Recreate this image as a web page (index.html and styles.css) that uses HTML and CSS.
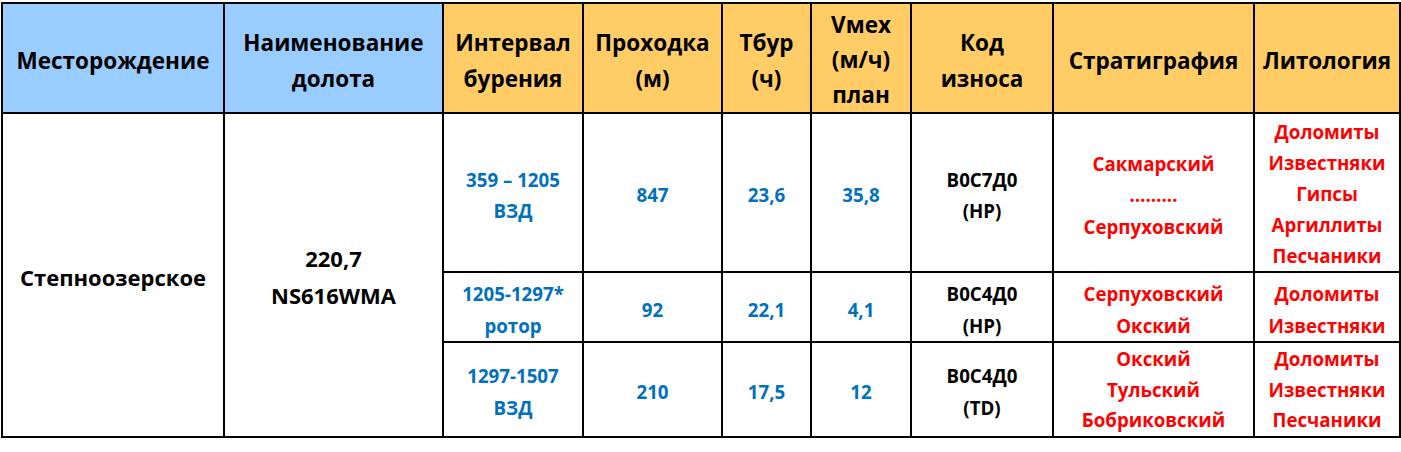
FILE: index.html
```html
<!DOCTYPE html>
<html lang="ru">
<head>
    <meta charset="UTF-8">
    <title>Долото</title>
    <link rel="stylesheet" href="styles.css">
</head>
<body>
    <table class="report">
        <colgroup>
            <col class="c-field">
            <col class="c-bit">
            <col class="c-interval">
            <col class="c-meters">
            <col class="c-time">
            <col class="c-speed">
            <col class="c-wear">
            <col class="c-strat">
            <col class="c-lith">
        </colgroup>
        <thead>
            <tr>
                <th class="blue">Месторождение</th>
                <th class="blue">Наименование<br>долота</th>
                <th>Интервал<br>бурения</th>
                <th>Проходка<br>(м)</th>
                <th>Тбур<br>(ч)</th>
                <th class="packed">Vмех<br>(м/ч)<br>план</th>
                <th>Код<br>износа</th>
                <th>Стратиграфия</th>
                <th>Литология</th>
            </tr>
        </thead>
        <tbody>
            <tr class="r1">
                <td rowspan="3" class="big">Степноозерское</td>
                <td rowspan="3" class="big tall">220,7<br>NS616WMA</td>
                <td class="num">359 – 1205<br>ВЗД</td>
                <td class="num">847</td>
                <td class="num">23,6</td>
                <td class="num">35,8</td>
                <td>В0С7Д0<br>(НР)</td>
                <td class="red">Сакмарский<br>………<br>Серпуховский</td>
                <td class="red packed">Доломиты<br>Известняки<br>Гипсы<br>Аргиллиты<br>Песчаники</td>
            </tr>
            <tr class="r2">
                <td class="num">1205-1297*<br>ротор</td>
                <td class="num">92</td>
                <td class="num">22,1</td>
                <td class="num">4,1</td>
                <td>В0С4Д0<br>(НР)</td>
                <td class="red">Серпуховский<br>Окский</td>
                <td class="red">Доломиты<br>Известняки</td>
            </tr>
            <tr class="r3">
                <td class="num">1297-1507<br>ВЗД</td>
                <td class="num">210</td>
                <td class="num">17,5</td>
                <td class="num">12</td>
                <td>В0С4Д0<br>(TD)</td>
                <td class="red packed">Окский<br>Тульский<br>Бобриковский</td>
                <td class="red packed">Доломиты<br>Известняки<br>Песчаники</td>
            </tr>
        </tbody>
    </table>
</body>
</html>
```

FILE: styles.css
```css
body {
    margin: 0;
    background-color: #fff;
    font-family: "Open Sans", "Noto Sans", sans-serif;
    font-weight: 700;
}

.report {
    border-collapse: collapse;
    table-layout: fixed;
    width: 1398px;
    margin: 2px 0 0 1px;
}

.c-field { width: 222px; }
.c-bit { width: 219px; }
.c-interval { width: 140px; }
.c-meters { width: 139px; }
.c-time { width: 89px; }
.c-speed { width: 100px; }
.c-wear { width: 142px; }
.c-strat { width: 201px; }
.c-lith { width: 146px; }

.report th,
.report td {
    border: 2px solid #000;
    padding: 5px 0 0;
    text-align: center;
    vertical-align: middle;
    color: #000;
}

.report th {
    height: 103px;
    background-color: #ffcc66;
    font-size: 22.5px;
    line-height: 36px;
}

.report th.blue {
    background-color: #99ccff;
}

.report th.packed {
    padding-top: 3px;
    line-height: 35px;
}

.report td {
    font-size: 18.7px;
    line-height: 31.5px;
}

.report td.big {
    font-size: 22px;
}

.report td.tall {
    line-height: 37px;
}

.report td.packed {
    padding-top: 2px;
    line-height: 31px;
}

.r3 td.packed {
    padding-top: 1px;
    line-height: 30.5px;
}

.report td.num {
    color: #0070c0;
}

.report td.red {
    color: #ff0000;
}

.r1 td { height: 152px; }
.r2 td { height: 63px; }
.r3 td { height: 87px; }
```
